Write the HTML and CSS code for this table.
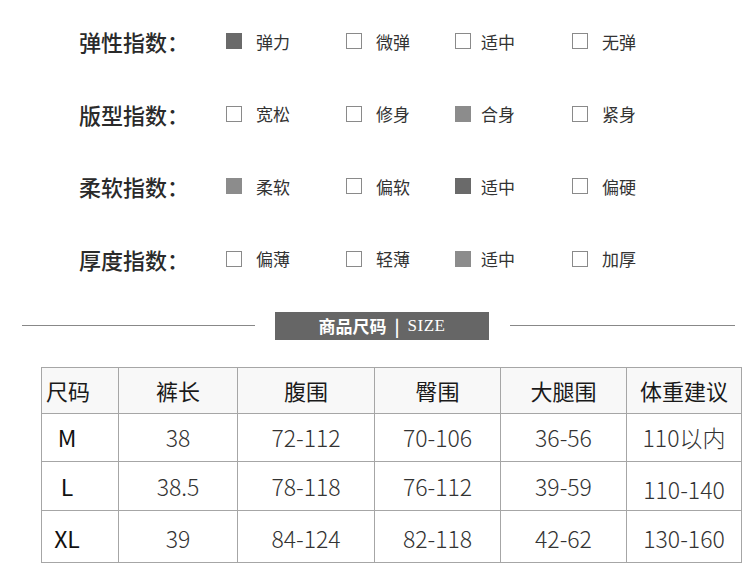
FILE: index.html
```html
<!DOCTYPE html>
<html lang="zh-CN">
<head>
<meta charset="utf-8">
<link rel="stylesheet" href="styles.css">
</head>
<body>
<div class="page">
  <div class="indexes">
    <div class="irow">
      <div class="ilabel">弹性指数：</div>
      <div class="opt"><span class="box dark"></span>弹力</div>
      <div class="opt"><span class="box"></span>微弹</div>
      <div class="opt"><span class="box"></span>适中</div>
      <div class="opt"><span class="box"></span>无弹</div>
    </div>
    <div class="irow">
      <div class="ilabel">版型指数：</div>
      <div class="opt"><span class="box"></span>宽松</div>
      <div class="opt"><span class="box"></span>修身</div>
      <div class="opt"><span class="box mid"></span>合身</div>
      <div class="opt"><span class="box"></span>紧身</div>
    </div>
    <div class="irow">
      <div class="ilabel">柔软指数：</div>
      <div class="opt"><span class="box mid"></span>柔软</div>
      <div class="opt"><span class="box"></span>偏软</div>
      <div class="opt"><span class="box dark"></span>适中</div>
      <div class="opt"><span class="box"></span>偏硬</div>
    </div>
    <div class="irow">
      <div class="ilabel">厚度指数：</div>
      <div class="opt"><span class="box"></span>偏薄</div>
      <div class="opt"><span class="box"></span>轻薄</div>
      <div class="opt"><span class="box mid"></span>适中</div>
      <div class="opt"><span class="box"></span>加厚</div>
    </div>
  </div>

  <div class="divider">
    <span class="line left"></span>
    <div class="tag"><span class="tag-cn">商品尺码</span><span class="tag-bar">|</span><span class="tag-en">SIZE</span></div>
    <span class="line right"></span>
  </div>

  <table class="sizes">
    <colgroup>
      <col class="c1"><col class="c2"><col class="c3"><col class="c4"><col class="c5"><col class="c6">
    </colgroup>
    <thead>
      <tr><th class="first">尺码</th><th>裤长</th><th>腹围</th><th>臀围</th><th>大腿围</th><th>体重建议</th></tr>
    </thead>
    <tbody>
      <tr class="r1"><td class="sz">M</td><td>38</td><td>72-112</td><td>70-106</td><td>36-56</td><td>110以内</td></tr>
      <tr class="r2"><td class="sz">L</td><td>38.5</td><td>78-118</td><td>76-112</td><td>39-59</td><td class="low">110-140</td></tr>
      <tr class="r3"><td class="sz">XL</td><td>39</td><td>84-124</td><td>82-118</td><td>42-62</td><td>130-160</td></tr>
    </tbody>
  </table>
</div>
</body>
</html>
```

FILE: styles.css
```css
html, body {
  margin: 0;
  padding: 0;
  background: #fff;
}
.page {
  width: 750px;
  height: 563px;
  overflow: hidden;
  font-family: "Noto Sans CJK SC", "Noto Sans", sans-serif;
  color: #222;
}
.indexes {
  padding: 23px 0 0 79px;
  display: flex;
  flex-direction: column;
  gap: 36.6px;
}
.irow {
  display: grid;
  grid-template-columns: 147px 120px 109px 117px 120px;
  align-items: center;
  height: 36px;
}
.ilabel {
  font-size: 22px;
  font-weight: 500;
  color: #2a2a2a;
}
.opt {
  display: flex;
  align-items: center;
  gap: 14px;
  font-size: 17px;
  color: #333;
}
.opt:nth-child(4) {
  gap: 10px;
}
.box {
  width: 14px;
  height: 14px;
  border: 1px solid #8a8a8a;
  background: #fff;
  flex: none;
}
.box.dark {
  background: #6a6a6a;
  border-color: #6a6a6a;
}
.box.mid {
  background: #8c8c8c;
  border-color: #8c8c8c;
}
.divider {
  margin-top: 35px;
  display: flex;
  align-items: center;
  padding: 0 15px 0 22px;
}
.line {
  height: 1px;
  background: #888;
}
.line.left {
  width: 233px;
  margin-right: 20px;
}
.line.right {
  flex: 1;
  margin-left: 21px;
}
.tag {
  width: 214px;
  height: 28px;
  background: #666;
  color: #fff;
  display: flex;
  align-items: center;
  justify-content: center;
  gap: 8px;
}
.tag-cn {
  font-size: 17px;
  font-weight: 700;
}
.tag-bar {
  font-size: 17px;
  font-weight: 700;
}
.tag-en {
  font-family: "Liberation Serif", serif;
  font-size: 17px;
  letter-spacing: 0.5px;
}
.sizes {
  margin: 27px 0 0 41px;
  border-collapse: collapse;
  table-layout: fixed;
  width: 700px;
}
.c1 { width: 77px; }
.c2 { width: 119px; }
.c3 { width: 137px; }
.c4 { width: 126px; }
.c5 { width: 126px; }
.c6 { width: 115px; }
.sizes th, .sizes td {
  border: 1px solid #a6a6a6;
  text-align: center;
  padding: 0;
  line-height: 30px;
}
.sizes th {
  height: 45px;
  font-size: 22px;
  font-weight: 400;
  background: #f8f8f8;
  color: #1a1a1a;
}
.sizes th.first {
  padding-right: 24px;
}
.sizes td {
  font-size: 23px;
  font-weight: 300;
  color: #333;
}
.sizes td.sz {
  font-weight: 400;
  color: #111;
  padding-right: 26px;
}
.r1 td { height: 47px; }
.r2 td { height: 48px; }
.r3 td {
  height: 48px;
  padding-top: 3px;
}
.sizes td.low {
  padding-top: 6px;
  height: 42px;
}
```
